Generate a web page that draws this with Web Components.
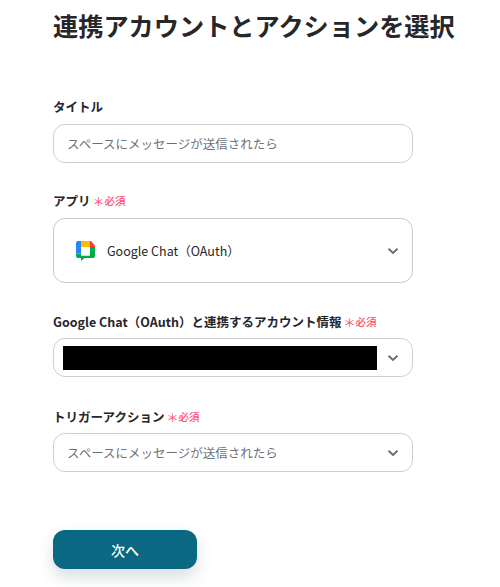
<!DOCTYPE html>
<html lang="ja">
<head>
<meta charset="utf-8">
<title>連携アカウントとアクションを選択</title>
<style>
  html, body { margin: 0; padding: 0; background: #fff; }
  body {
    width: 500px; height: 587px; overflow: hidden;
    font-family: "Noto Sans CJK JP", "Noto Sans", sans-serif;
  }
</style>
</head>
<body>
<flow-form>
  <span slot="title">連携アカウントとアクションを選択</span>
  <form-field label="タイトル" style="--label-gap:8px">
    <text-box>スペースにメッセージが送信されたら</text-box>
  </form-field>
  <form-field label="アプリ" required style="--field-top:28px;--label-gap:8px">
    <select-box tall>
      <chat-icon></chat-icon>
      <span class="app">Google Chat（OAuth）</span>
    </select-box>
  </form-field>
  <form-field label="Google Chat（OAuth）と連携するアカウント情報" required style="--field-top:29px;--label-gap:7px">
    <select-box masked></select-box>
  </form-field>
  <form-field label="トリガーアクション" required style="--field-top:30px;--label-gap:7px">
    <select-box muted>スペースにメッセージが送信されたら</select-box>
  </form-field>
  <next-button>次へ</next-button>
</flow-form>

<script>
class FlowForm extends HTMLElement {
  constructor() {
    super();
    this.attachShadow({ mode: 'open' });
    this.shadowRoot.innerHTML = `
      <style>
        :host { display: block; padding: 7px 0 0 53px; color: #222; }
        h1 {
          margin: 0 0 54px;
          font-size: 25.2px;
          line-height: 36px;
          font-weight: 700;
          color: #27272a;
          white-space: nowrap;
        }
        .fields { display: flex; flex-direction: column; width: 360px; }
      </style>
      <h1><slot name="title"></slot></h1>
      <div class="fields"><slot></slot></div>
    `;
  }
}

class FormField extends HTMLElement {
  constructor() {
    super();
    this.attachShadow({ mode: 'open' });
    const req = this.hasAttribute('required')
      ? '<span class="star">＊</span><span class="req">必須</span>' : '';
    this.shadowRoot.innerHTML = `
      <style>
        :host { display: block; margin-top: var(--field-top, 0); }
        .label {
          display: flex;
          align-items: center;
          height: 19px;
          margin-bottom: var(--label-gap, 7px);
          font-size: 12.5px;
          font-weight: 700;
          color: #27272a;
          white-space: nowrap;
        }
        .star {
          margin-left: 2px;
          font-size: 12px;
          font-weight: 400;
          color: #ff4d6d;
          position: relative;
          top: 1px;
        }
        .req { margin-left: 0; font-size: 10.5px; font-weight: 500; color: #ff4d6d; }
      </style>
      <div class="label"><span>${this.getAttribute('label')}</span>${req}</div>
      <slot></slot>
    `;
  }
}

class TextBox extends HTMLElement {
  constructor() {
    super();
    this.attachShadow({ mode: 'open' });
    this.shadowRoot.innerHTML = `
      <style>
        :host {
          display: flex;
          align-items: center;
          box-sizing: border-box;
          height: 39px;
          padding: 0 13px;
          border: 1px solid #cbd0d8;
          border-radius: 12px;
          font-size: 12.5px;
          color: #6b6f76;
          white-space: nowrap;
        }
      </style>
      <slot></slot>
    `;
  }
}

class SelectBox extends HTMLElement {
  constructor() {
    super();
    this.attachShadow({ mode: 'open' });
    this.shadowRoot.innerHTML = `
      <style>
        :host {
          display: flex;
          align-items: center;
          box-sizing: border-box;
          height: 39px;
          padding: 0 13px;
          border: 1px solid #cbd0d8;
          border-radius: 12px;
          font-size: 12.5px;
          color: #27272a;
          white-space: nowrap;
        }
        :host([tall]) { height: 65px; padding-left: 21px; border-color: #c9c9c9; }
        :host([muted]) { color: #6b6f76; }
        :host([masked]) { padding-left: 9px; }
        .content { flex: 1; display: flex; align-items: center; gap: 12px; min-width: 0; }
        .mask { display: none; width: 314px; height: 24px; background: #000; }
        :host([masked]) .mask { display: block; }
        svg { flex: none; width: 12px; height: 8px; }
      </style>
      <div class="content"><div class="mask"></div><slot></slot></div>
      <svg viewBox="0 0 12 8" fill="none" stroke="#6e6e6e" stroke-width="2">
        <path d="M1.5 1.8 6 6 10.5 1.8"/>
      </svg>
    `;
  }
}

class ChatIcon extends HTMLElement {
  constructor() {
    super();
    this.attachShadow({ mode: 'open' });
    this.shadowRoot.innerHTML = `
      <style>
        :host { display: block; width: 20px; height: 21px; flex: none; }
        svg { display: block; width: 20px; height: 21px; }
      </style>
      <svg viewBox="0 0 20 21">
        <path fill="#00ac47" d="M1 13.5h5v2h8a1 1 0 0 0 1-1V7h5v9a2 2 0 0 1-2 2H9.5L6 21v-3H3a2 2 0 0 1-2-2z"/>
        <path fill="#2684fc" d="M3 1h3.5v5H6v7.5H1V3a2 2 0 0 1 2-2z"/>
        <path fill="#ffba00" d="M6 1h9v6H6z"/>
        <path fill="#ea4335" d="M15 1h1l4 4.500V7h-5z"/>
        <path fill="#fff" d="M6 7h9v8.500H6z"/>
      </svg>
    `;
  }
}

class NextButton extends HTMLElement {
  constructor() {
    super();
    this.attachShadow({ mode: 'open' });
    this.shadowRoot.innerHTML = `
      <style>
        :host {
          display: flex;
          align-items: center;
          justify-content: center;
          align-self: flex-start;
          width: 144px;
          height: 39px;
          margin-top: 58px;
          border-radius: 12px;
          background: #0a6882;
          box-shadow: 0 8px 16px rgba(40, 70, 90, 0.18);
          color: #fff;
          font-size: 14px;
          font-weight: 500;
        }
      </style>
      <slot></slot>
    `;
  }
}

customElements.define('flow-form', FlowForm);
customElements.define('form-field', FormField);
customElements.define('text-box', TextBox);
customElements.define('select-box', SelectBox);
customElements.define('chat-icon', ChatIcon);
customElements.define('next-button', NextButton);
</script>
</body>
</html>
